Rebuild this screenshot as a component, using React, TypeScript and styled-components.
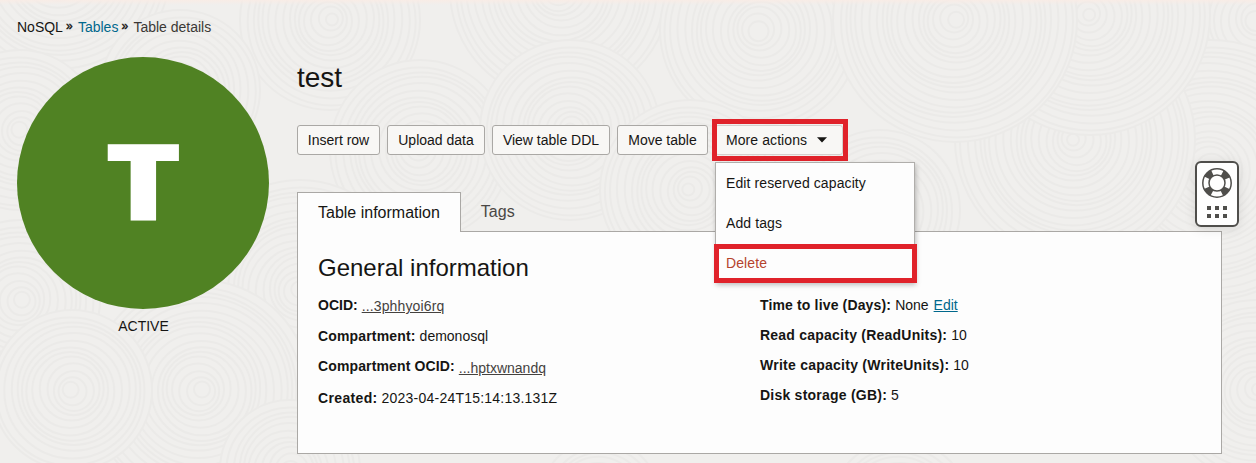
import React from "react";
import styled, { createGlobalStyle } from "styled-components";

const Global = createGlobalStyle`
  * { box-sizing: border-box; }
  body {
    margin: 0;
    background: #f0efed;
    color: #161513;
    font: 14px/20px "Liberation Sans", Arial, sans-serif;
  }
`;

const Page = styled.div`
  position: relative;
  width: 1256px;
  height: 463px;
  overflow: hidden;
  background: #f0efed;
`;

const Texture = styled.svg`
  position: absolute;
  inset: 0;
  display: block;
`;

const TopGlow = styled.div`
  position: absolute;
  inset: 0 0 auto 0;
  height: 5px;
  background: linear-gradient(#f8ece6, rgba(248, 236, 230, 0));
`;

const Content = styled.div`
  position: relative;
  padding: 17px 34px 0 17px;
`;

const Breadcrumb = styled.nav`
  display: flex;
  height: 20px;
`;

const Crumb = styled.span<{ $color?: string }>`
  color: ${(p) => p.$color ?? "#3b3835"};
`;

const Separator = styled.span`
  width: 15px;
  padding-left: 3px;
  font-size: 12px;
  line-height: 19px;
  color: #161513;
  -webkit-text-stroke: 0.4px #161513;
`;

const Body = styled.div`
  display: flex;
  gap: 28px;
  padding-top: 20px;
`;

const Aside = styled.aside`
  width: 252px;
  flex: none;
  text-align: center;
`;

const StatusBadge = styled.div`
  display: flex;
  align-items: center;
  justify-content: center;
  width: 252px;
  height: 252px;
  padding-bottom: 9px;
  border-radius: 50%;
  background: #508223;
  color: #fff;
  font: 800 106px/120px "Open Sans", sans-serif;
`;

const Initial = styled.span`
  transform: scaleX(1.24);
`;

const StatusLabel = styled.div`
  padding: 7px 0 0 1px;
  line-height: 20px;
`;

const Main = styled.main`
  width: 925px;
  flex: none;
`;

const Title = styled.h1`
  margin: 0;
  padding-top: 3px;
  font-size: 28px;
  line-height: 36px;
  font-weight: 400;
`;

const Toolbar = styled.div`
  display: flex;
  margin-top: 29px;
  gap: 7px;
  height: 30px;
`;

const Button = styled.button<{ $width: number }>`
  width: ${(p) => p.$width}px;
  height: 30px;
  padding: 0;
  border: 1px solid #aaa8a5;
  border-radius: 3px;
  background: #f8f7f5;
  color: #161513;
  font: inherit;
  line-height: 28px;
  white-space: nowrap;
`;

const MenuAnchor = styled.div`
  position: relative;
`;

const MenuButton = styled(Button)`
  display: flex;
  align-items: center;
  gap: 10px;
  padding-left: 10px;
  border-color: #d5cfcc;
  letter-spacing: 0.08px;
`;

const Highlight = styled.div<{ $top: number; $left: number; $width: number; $height: number }>`
  position: absolute;
  top: ${(p) => p.$top}px;
  left: ${(p) => p.$left}px;
  width: ${(p) => p.$width}px;
  height: ${(p) => p.$height}px;
  border: 5px solid #e0222a;
`;

const Menu = styled.div`
  position: absolute;
  z-index: 2;
  top: 37px;
  left: 0;
  width: 200px;
  height: 120px;
  border: 1px solid #b0aeab;
  background: #fdfdfd;
  box-shadow: 1px 3px 5px rgba(0, 0, 0, 0.25);
`;

const MenuItem = styled.div<{ $danger?: boolean }>`
  height: 40px;
  padding-left: 10px;
  line-height: 40px;
  letter-spacing: 0.1px;
  color: ${(p) => (p.$danger ? "#b5432d" : "#161513")};
`;

const Tabs = styled.div`
  display: flex;
  margin-top: 37px;
  height: 40px;
  font-size: 16px;
`;

const Tab = styled.div<{ $active?: boolean }>`
  position: relative;
  z-index: 1;
  padding: 0 20px;
  height: 40px;
  line-height: ${(p) => (p.$active ? 39 : 40)}px;
  color: ${(p) => (p.$active ? "#161513" : "#4a4744")};
  border: ${(p) => (p.$active ? "1px solid #aaa8a5" : "0")};
  border-bottom: 0;
  background: ${(p) => (p.$active ? "#fdfdfd" : "transparent")};
`;

const Panel = styled.section`
  height: 223px;
  margin-top: -1px;
  border: 1px solid #aaa8a5;
  background: #fdfdfd;
  padding: 20px 0 0 20px;
`;

const Heading = styled.h2`
  margin: 0;
  font-size: 24px;
  line-height: 32px;
  font-weight: 400;
`;

const Columns = styled.div`
  display: grid;
  grid-template-columns: 442px 1fr;
  padding-top: 11px;
`;

const Field = styled.div<{ $height: number }>`
  display: flex;
  gap: 4px;
  height: ${(p) => p.$height}px;
  line-height: 20px;
  white-space: nowrap;
`;

const Label = styled.b<{ $spacing: number }>`
  font-weight: 700;
  letter-spacing: ${(p) => p.$spacing}px;
`;

const Value = styled.span<{ $spacing?: number }>`
  letter-spacing: ${(p) => p.$spacing ?? 0}px;
`;

const OcidLink = styled.a<{ $drop: number; $spacing?: number }>`
  margin-top: ${(p) => p.$drop}px;
  color: #45423f;
  letter-spacing: ${(p) => p.$spacing ?? 0}px;
  text-decoration: underline;
`;

const EditLink = styled.a`
  margin-left: 1px;
  color: #00688c;
  text-decoration: underline;
`;

const HelpWidget = styled.div`
  position: absolute;
  top: 161px;
  left: 1195px;
  display: flex;
  flex-direction: column;
  align-items: center;
  gap: 8px;
  width: 44px;
  height: 66px;
  padding-top: 5px;
  border: 2px solid #4f4e4b;
  border-radius: 6px;
  background: #fefefe;
  box-shadow: 0 2px 12px rgba(0, 0, 0, 0.1);
`;

const DotGrid = styled.div`
  display: grid;
  grid-template-columns: repeat(3, 4px);
  grid-auto-rows: 4px;
  gap: 4px;
`;

const Dot = styled.i`
  background: #4f4e4b;
`;

const swirls = [
  [60, -30, 110], [330, 20, 90], [180, 90, 80], [560, -10, 110], [760, 30, 100],
  [20, 130, 80], [420, 150, 90], [1256, 20, 70], [1210, 170, 130], [570, 130, 90],
  [690, 190, 90], [880, 210, 80], [1075, 140, 120], [1090, 15, 120], [955, 20, 122],
  [300, 290, 110], [20, 300, 80], [200, 390, 110], [72, 390, 80], [290, 470, 70],
  [1256, 390, 90], [600, 500, 60], [900, 510, 70],
];

const Background = () => (
  <Texture width="1256" height="463" viewBox="0 0 1256 463">
    <rect width="1256" height="463" fill="#f0efed" />
    {swirls.map(([x, y, r], i) => (
      <g key={i} stroke="#ebeae8" strokeWidth="2" fill="none">
        <circle cx={x} cy={y} r={r} fill="#f0efed" />
        {Array.from({ length: Math.floor(r / 6) - 1 }, (_, n) => (
          <ellipse
            key={n}
            cx={x + 2 * Math.sin(n + i)}
            cy={y + 1.5 * Math.cos(n * 1.3)}
            rx={r - 6 * (n + 1)}
            ry={r - 6 * (n + 1)}
          />
        ))}
      </g>
    ))}
  </Texture>
);

const Lifebuoy = () => (
  <svg width="30" height="30" viewBox="0 0 30 30" fill="none" stroke="#4f4e4b">
    <circle cx="15" cy="15" r="11.2" strokeWidth="6.4" strokeDasharray="7.4 10.193" strokeDashoffset="-5.1" />
    <circle cx="15" cy="15" r="14.2" strokeWidth="1.5" />
    <circle cx="15" cy="15" r="8" strokeWidth="1.5" />
  </svg>
);

const leftFields = [
  { label: "OCID:", spacing: 0, link: "...3phhyoi6rq", valueSpacing: 0.14, drop: 1, height: 31 },
  { label: "Compartment:", spacing: 0.16, value: "demonosql", height: 30 },
  { label: "Compartment OCID:", spacing: 0.13, link: "...hptxwnandq", drop: 2, height: 32 },
  { label: "Created:", spacing: 0.35, value: "2023-04-24T15:14:13.131Z", valueSpacing: 0.22, height: 20 },
];

const rightFields = [
  { label: "Time to live (Days):", spacing: 0.15, value: "None", edit: true },
  { label: "Read capacity (ReadUnits):", spacing: 0.23, value: "10" },
  { label: "Write capacity (WriteUnits):", spacing: 0.25, value: "10" },
  { label: "Disk storage (GB):", spacing: 0.23, value: "5" },
];

export default function App() {
  return (
    <Page>
      <Global />
      <Background />
      <TopGlow />
      <Content>
        <Breadcrumb>
          <Crumb $color="#161513">NoSQL</Crumb>
          <Separator>»</Separator>
          <Crumb $color="#00688c">Tables</Crumb>
          <Separator>»</Separator>
          <Crumb>Table details</Crumb>
        </Breadcrumb>
        <Body>
          <Aside>
            <StatusBadge>
              <Initial>T</Initial>
            </StatusBadge>
            <StatusLabel>ACTIVE</StatusLabel>
          </Aside>
          <Main>
            <Title>test</Title>
            <Toolbar>
              <Button $width={83}>Insert row</Button>
              <Button $width={98}>Upload data</Button>
              <Button $width={118}>View table DDL</Button>
              <Button $width={91}>Move table</Button>
              <MenuAnchor>
                <MenuButton $width={128}>
                  More actions
                  <svg width="10" height="6" viewBox="0 0 10 6">
                    <path d="M0 .3h10L5 5.6z" fill="#161513" />
                  </svg>
                </MenuButton>
                <Highlight $top={-6} $left={-3} $width={136} $height={42} />
                <Menu>
                  <MenuItem>Edit reserved capacity</MenuItem>
                  <MenuItem>Add tags</MenuItem>
                  <MenuItem $danger>Delete</MenuItem>
                  <Highlight $top={81} $left={-2} $width={203} $height={39} />
                </Menu>
              </MenuAnchor>
            </Toolbar>
            <Tabs>
              <Tab $active>Table information</Tab>
              <Tab>Tags</Tab>
            </Tabs>
            <Panel>
              <Heading>General information</Heading>
              <Columns>
                <div>
                  {leftFields.map((f) => (
                    <Field key={f.label} $height={f.height}>
                      <Label $spacing={f.spacing}>{f.label}</Label>
                      {f.link ? (
                        <OcidLink $drop={f.drop ?? 0} $spacing={f.valueSpacing}>
                          {f.link}
                        </OcidLink>
                      ) : (
                        <Value $spacing={f.valueSpacing}>{f.value}</Value>
                      )}
                    </Field>
                  ))}
                </div>
                <div>
                  {rightFields.map((f) => (
                    <Field key={f.label} $height={30}>
                      <Label $spacing={f.spacing}>{f.label}</Label>
                      <Value>{f.value}</Value>
                      {f.edit && <EditLink>Edit</EditLink>}
                    </Field>
                  ))}
                </div>
              </Columns>
            </Panel>
          </Main>
        </Body>
      </Content>
      <HelpWidget>
        <Lifebuoy />
        <DotGrid>
          {[0, 1, 2, 3, 4, 5].map((n) => (
            <Dot key={n} />
          ))}
        </DotGrid>
      </HelpWidget>
    </Page>
  );
}
